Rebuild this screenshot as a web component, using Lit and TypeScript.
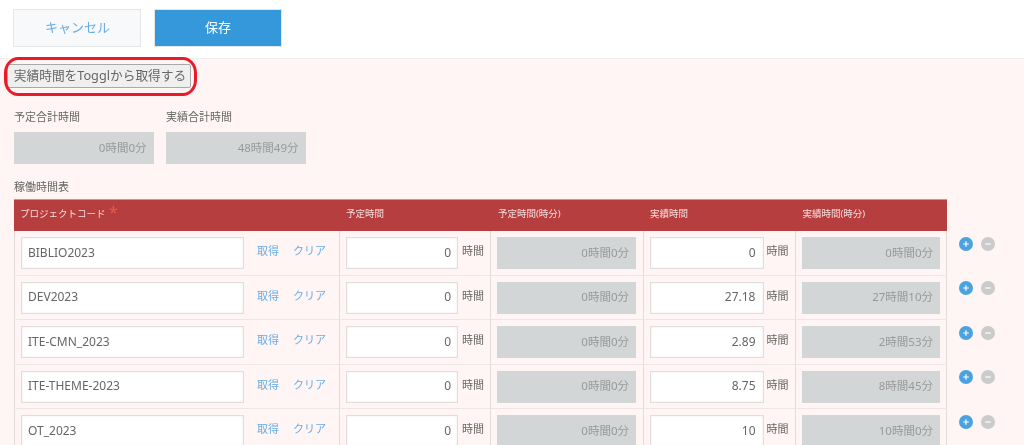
import { LitElement, html, css } from "lit";
import { customElement } from "lit/decorators.js";

const rows = [
  ["BIBLIO2023", "0", "0時間0分"],
  ["DEV2023", "27.18", "27時間10分"],
  ["ITE-CMN_2023", "2.89", "2時間53分"],
  ["ITE-THEME-2023", "8.75", "8時間45分"],
  ["OT_2023", "10", "10時間0分"],
];

@customElement("app-root")
export class AppRoot extends LitElement {
  static styles = css`
    :host { display: block; width: 1024px; height: 445px; overflow: hidden; position: relative; background: #fff;
      font-family: "Noto Sans", "Noto Sans CJK JP", sans-serif; font-size: 12px; color: #666; filter: blur(0.3px); }
    .top { height: 59px; box-sizing: border-box; padding: 9px 13px 0; display: flex; gap: 12.5px; border-bottom: 1px solid #eee; }
    .btn { width: 128px; height: 38px; box-sizing: border-box; display: flex; align-items: center; justify-content: center; font-size: 13px; padding: 0 0 3px 1px; }
    .cancel { background: #f7f9fa; border: 1px solid #e3e7e8; color: #68ace4; }
    .save { background: #3498db; border: 1px solid #e3e7e8; color: #fff; }
    .main { height: 386px; background: #fff5f4; box-sizing: border-box; padding: 5px 0 0 14px; }
    .fetch { display: block; margin-left: -7px; width: 184px; height: 24px; padding: 0 0 3px 2px; box-sizing: border-box; background: #efefef; border: 1px solid #a9a9a9; border-radius: 2px;
      font: 12.7px "Noto Sans", "Noto Sans CJK JP", sans-serif; color: #666; }
    .oval { position: absolute; left: 4px; top: 57px; width: 193px; height: 39px; box-sizing: border-box; border: 3px solid #ea1a28; border-radius: 14px / 16px; }
    .totals { display: flex; gap: 12.5px; margin-top: 21px; }
    .total { width: 139.5px; }
    .total label { display: block; height: 23px; line-height: 16px; font-size: 11px; }
    .ro { height: 32px; box-sizing: border-box; background: #d3d6d6; color: #999; font-size: 11.5px; display: flex; align-items: center; justify-content: flex-end; padding: 0 7px 3px 0; }
    .title { margin-top: 15px; height: 20px; line-height: 16px; font-size: 11px; }
    .wrap { display: flex; }
    .grid { width: 933px; }
    .row { display: grid; grid-template-columns: 325px 151px 153px 151.5px 152.5px; }
    .head { height: 32px; background: #b73e3e; border-top: 1px solid #d98f8f; box-sizing: border-box; color: #f6dcdc; font-size: 9.5px; }
    .head div { padding: 0 0 0 7px; line-height: 27px; }
    .head div:first-child { padding-left: 6px; }
    .head div:nth-child(3), .head div:nth-child(5) { padding-left: 8px; }
    .star { color: #e8584f; font-size: 16px; line-height: 0; vertical-align: -1px; margin-left: 1px; }
    .body { height: 44.5px; box-sizing: border-box; border-bottom: 1px solid #ece6e5; }
    .body > div { box-sizing: border-box; border-left: 1px solid #e2dddc; padding: 6px 6px 0; display: flex; align-items: flex-start; height: 43.5px; }
    .body > div:last-child { border-right: 1px solid #e2dddc; }
    .input { height: 32px; box-sizing: border-box; background: #fff; border: 1px solid #e0dddd; box-shadow: inset 0 0 3px #eee; display: flex; align-items: center; font-size: 12px; color: #666; padding-bottom: 2px; }
    .code { width: 223px; padding-left: 6px; }
    .num { width: 113px; justify-content: flex-end; padding-right: 6px; }
    .wide { width: 114px; padding-right: 7px; }
    .unit { margin-left: 4px; line-height: 28px; font-size: 11px; white-space: nowrap; }
    .wide + .unit { margin-left: 3px; }
    .link { color: #68ace4; font-size: 11px; line-height: 28px; }
    .link.a { margin-left: 13px; }
    .link.b { margin-left: 14px; }
    .ro.cell { width: 139px; }
    .ops { width: 90px; padding-top: 32px; }
    .oprow { height: 44.5px; display: flex; gap: 8px; padding: 5.5px 0 0 12px; box-sizing: border-box; }
    .op { width: 14px; height: 14px; }
  `;

  render() {
    return html`
      <div class="top">
        <div class="btn cancel">キャンセル</div>
        <div class="btn save">保存</div>
      </div>
      <div class="main">
        <button class="fetch">実績時間をTogglから取得する</button>
        <div class="totals">
          <div class="total"><label>予定合計時間</label><div class="ro">0時間0分</div></div>
          <div class="total"><label>実績合計時間</label><div class="ro">48時間49分</div></div>
        </div>
        <div class="title">稼働時間表</div>
        <div class="wrap">
          <div class="grid">
            <div class="row head">
              <div>プロジェクトコード <span class="star">*</span></div>
              <div>予定時間</div><div>予定時間(時分)</div><div>実績時間</div><div>実績時間(時分)</div>
            </div>
            ${rows.map((r) => html`
              <div class="row body">
                <div><span class="input code">${r[0]}</span><span class="link a">取得</span><span class="link b">クリア</span></div>
                <div><span class="input num">0</span><span class="unit">時間</span></div>
                <div><span class="ro cell">0時間0分</span></div>
                <div><span class="input num wide">${r[1]}</span><span class="unit">時間</span></div>
                <div><span class="ro cell">${r[2]}</span></div>
              </div>`)}
          </div>
          <div class="ops">
            ${rows.map(() => html`
              <div class="oprow">
                <svg class="op" viewBox="0 0 14 14"><circle cx="7" cy="7" r="7" fill="#4aa3df"/><path d="M7 4.2v5.6M4.2 7h5.6" stroke="#fff" stroke-width="1.2"/></svg>
                <svg class="op" viewBox="0 0 14 14"><circle cx="7" cy="7" r="7" fill="#cbcbcb"/><path d="M4.2 7h5.6" stroke="#fff" stroke-width="1.2"/></svg>
              </div>`)}
          </div>
        </div>
      </div>
      <div class="oval"></div>
    `;
  }
}
